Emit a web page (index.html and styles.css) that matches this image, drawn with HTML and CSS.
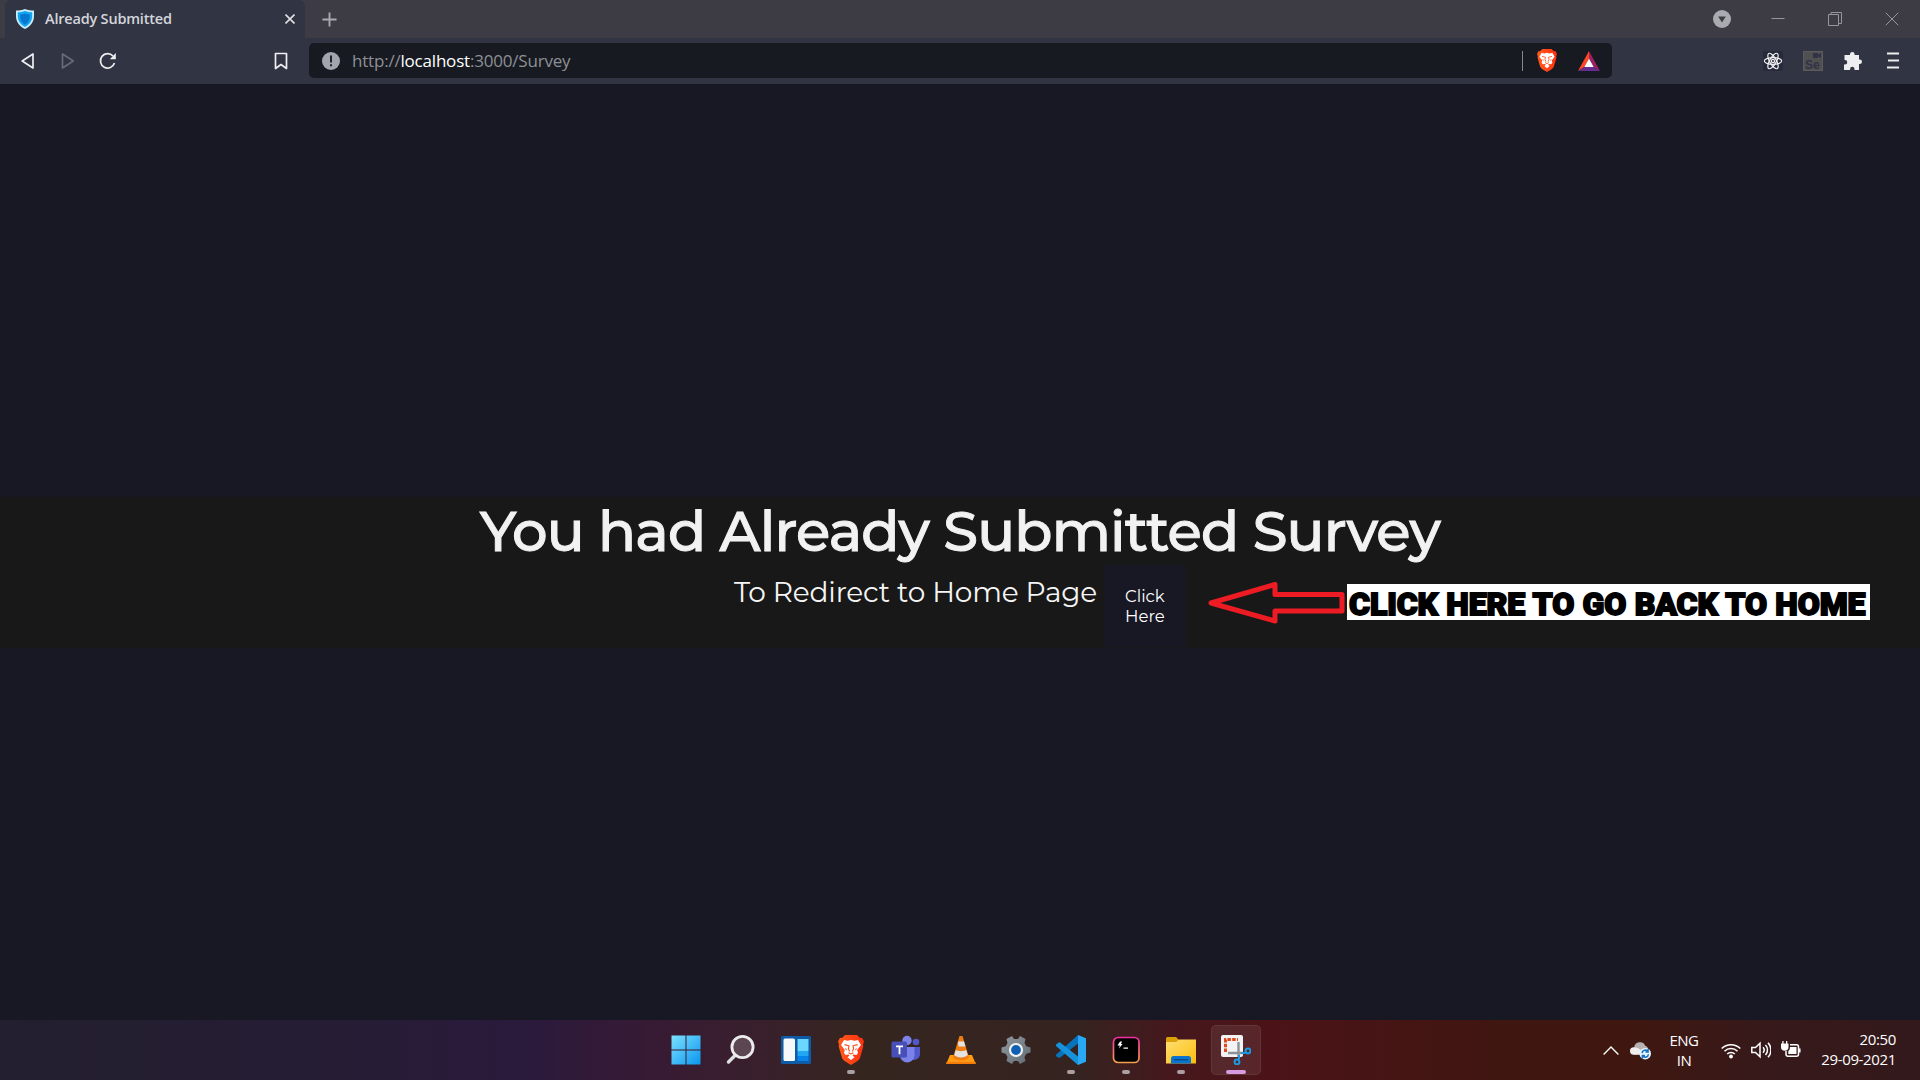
FILE: index.html
```html
<!DOCTYPE html>
<html lang="en">
<head>
<meta charset="utf-8">
<title>Already Submitted</title>
<link rel="stylesheet" href="styles.css">
</head>
<body>
<svg class="defs" width="0" height="0" aria-hidden="true">
  <defs>
    <linearGradient id="brave" x1="0" x2="1"><stop offset="0" stop-color="#ff5a1c"/><stop offset="1" stop-color="#ff2f10"/></linearGradient>
    <linearGradient id="win" x1="0" y1="0" x2="1" y2="1"><stop offset="0" stop-color="#7ce2ff"/><stop offset="1" stop-color="#0a95ee"/></linearGradient>
    <linearGradient id="term" x1="0" y1="0" x2="0" y2="1"><stop offset="0" stop-color="#f32fa4"/><stop offset="1" stop-color="#f5a04c"/></linearGradient>
    <linearGradient id="folder" x1="0" y1="0" x2="1" y2="1"><stop offset="0" stop-color="#ffdf73"/><stop offset="1" stop-color="#fbbd0c"/></linearGradient>
    <linearGradient id="gear" x1="0" y1="0" x2="1" y2="1"><stop offset="0" stop-color="#8f999f"/><stop offset="1" stop-color="#626c73"/></linearGradient>
    <symbol id="lion" viewBox="0 0 26 30">
      <path fill="url(#brave)" d="M7 0h12l3 3 2-.3 2 3.800-1 3 .3 2-3.500 12L19.500 26 13 30l-6.500-4-2.300-2.500L.7 11.500 1 9.500 0 6.500l2-3.800L4 3z"/>
      <path fill="#fff" d="M6 5l3.500.8L13 5l3.500.8L20 5l3 5-3.800 5 .8 3-1.500 2-3-.5-1 1 2 1.700L13 25l-3.500-2.800 2-1.700-1-1-3 .5L6 18l.8-3L3 10z"/>
      <path fill="none" stroke="#ff4a18" stroke-width="1.100" d="M6.500 9.600l4.500 1.200-.6 3 1.200 2.700M19.500 9.600L15 10.800l.6 3-1.200 2.700M10.500 17.800l2.500 1.200 2.500-1.200M7.500 13.500l1 1.500M18.500 13.500l-1 1.500"/>
    </symbol>
  </defs>
</svg>

<div class="screen">
  <header class="tabstrip">
    <div class="tab">
      <svg class="favicon" viewBox="0 0 18 20"><path fill="#c9efff" d="M9 0c3 1.300 6 1.500 9 1.500V7c0 6-3.500 10.500-9 13C3.500 17.500 0 13 0 7V1.500C3 1.500 6 1.300 9 0z"/><path fill="#12a5f4" d="M9 2c2.500.9 4.800 1.200 7.200 1.200V7c0 5-2.700 8.800-7.200 11C4.500 15.800 1.800 12 1.800 7V3.200C4.200 3.200 6.500 2.900 9 2z"/><path fill="#0878cf" d="M9 4.500c1.800.6 3.200.9 4.700.9V8c0 3.500-1.700 6-4.700 7.800C6 14 4.300 11.500 4.300 8V5.400C5.800 5.400 7.200 5.100 9 4.500z"/></svg>
      <span class="tab-title">Already Submitted</span>
      <svg class="tab-close" viewBox="0 0 10 10"><path d="M.5.5l9 9M9.500.5l-9 9"/></svg>
    </div>
    <svg class="new-tab" viewBox="0 0 16 16"><path d="M8 .5v15M.5 8h15"/></svg>
    <div class="window-controls">
      <svg class="tab-search" viewBox="0 0 18 18"><circle cx="9" cy="9" r="9" fill="#a9abb0"/><path fill="#3d3c44" d="M5.200 6.500h7.600L9 12.500z"/></svg>
      <span class="control"><svg viewBox="0 0 14 14"><path d="M.5 6.500h13"/></svg></span>
      <span class="control"><svg viewBox="0 0 14 14"><path d="M.5 2.500h10v11H.5zM3 2.500v-2h10.500v11h-3"/></svg></span>
      <span class="control"><svg viewBox="0 0 14 14"><path d="M.8.8l12.400 12.400M13.200.8L.8 13.200"/></svg></span>
    </div>
  </header>

  <nav class="toolbar">
    <span class="tool"><svg viewBox="0 0 20 20"><path d="M15 3v14L4.200 10z"/></svg></span>
    <span class="tool dim"><svg viewBox="0 0 20 20"><path d="M4.500 3v14L15.300 10z"/></svg></span>
    <span class="tool"><svg viewBox="0 0 20 20"><path d="M15 5A7.200 7.200 0 1 0 16.500 12"/><path class="solid" d="M17.800 2v6.300h-6z"/></svg></span>
    <span class="tool bookmark"><svg viewBox="0 0 20 20"><path d="M4.500 2.500h11v15L10 13.500l-5.500 4z"/></svg></span>
    <div class="address">
      <svg class="info" viewBox="0 0 18 18"><circle cx="9" cy="9" r="9" fill="#a2a5ad"/><path fill="#20232c" d="M8 3.500h2v7H8zM8 12.300h2v2H8z"/></svg>
      <span class="url">http://<b>localhost</b>:3000/Survey</span>
      <span class="divider"></span>
      <svg class="shield" viewBox="0 0 26 30"><use href="#lion"/></svg>
      <svg class="rewards" viewBox="0 0 22 20"><path fill="#ff4724" d="M11 0v7.500L6.300 16 0 20z"/><path fill="#9e1f63" d="M11 0l11 20-6.300-4L11 7.500z"/><path fill="#662d91" d="M0 20l6.300-4h9.400l6.300 4z"/><path fill="#fff" d="M11 7.500l4.700 8.500H6.300z"/></svg>
    </div>
    <div class="extensions">
      <span class="tool"><svg class="react" viewBox="0 0 20 20"><rect width="20" height="20" rx="2"/><circle cx="10" cy="10" r="1.600"/><ellipse cx="10" cy="10" rx="8.700" ry="3.300"/><ellipse cx="10" cy="10" rx="8.700" ry="3.300" transform="rotate(60 10 10)"/><ellipse cx="10" cy="10" rx="8.700" ry="3.300" transform="rotate(120 10 10)"/></svg></span>
      <span class="tool"><span class="selenium"><svg viewBox="0 0 8 5"><path d="M0 0h5v1.500L8 0v5L5 3.500V5H0z"/></svg>Se</span></span>
      <span class="tool"><svg class="puzzle" viewBox="0 0 18 18"><path d="M2 3h4V2.300a2.300 2.300 0 0 1 4.600 0V3H15v4.500h.7a2.300 2.300 0 0 1 0 4.600H15V18h-4.500v-1a2.200 2.200 0 0 0-4.400 0v1H0v-5.500h1a2.200 2.200 0 0 0 0-4.500H.5V3z"/></svg></span>
      <span class="tool"><svg class="menu" viewBox="0 0 12 18"><path d="M0 1.500h12M1 8.500h11M0 15.500h12"/></svg></span>
    </div>
  </nav>

  <main class="page">
    <section class="notice">
      <h1>You had Already Submitted Survey</h1>
      <div class="redirect">
        <p>To Redirect to Home Page</p>
        <a class="home-link">Click<br>Here</a>
      </div>
      <div class="callout">
        <svg class="arrow" viewBox="0 0 138 42"><path d="M3 21L67 2.500V12.500H134V29H67V39z"/></svg>
        <span class="callout-text">CLICK HERE TO GO BACK TO HOME</span>
      </div>
    </section>
  </main>

  <footer class="taskbar">
    <div class="apps">
      <span class="app"><svg viewBox="0 0 30 30"><path fill="url(#win)" d="M.5.500H14.500v14H.5zM15.500.5h14v14h-14zM.5 15.500h14v14H.5zM15.500 15.500h14v14h-14z"/></svg></span>
      <span class="app"><svg viewBox="0 0 30 30"><path stroke="#dfe0e1" stroke-width="3.400" stroke-linecap="round" d="M2.500 27l7-7"/><circle cx="16.500" cy="12" r="10.600" fill="#5c4652" stroke="#ececec" stroke-width="2.800"/></svg></span>
      <span class="app"><svg viewBox="0 0 30 30"><rect y="1" width="30" height="28" rx="1.500" fill="#0f5ba6"/><rect x="2.500" y="3.500" width="11.500" height="22.500" rx="1.500" fill="#f7f8f9"/><path fill="#6bd7ff" d="M16.500 4h11v12h-11z"/><path fill="#22a7f5" d="M16.500 16h11v5h-11z"/><path fill="#0784ea" d="M16.500 21h11v5h-11z"/></svg></span>
      <span class="app running"><svg viewBox="0 0 26 30"><use href="#lion"/></svg></span>
      <span class="app"><svg viewBox="0 0 30 30"><circle cx="25" cy="7" r="3.300" fill="#5059c9"/><path fill="#5059c9" d="M20 12h9v8a6 6 0 0 1-9 4z"/><circle cx="16" cy="5.500" r="4.700" fill="#7b83eb"/><path fill="#7b83eb" d="M9 12h14.500v9a7.300 7.300 0 0 1-14.500 0z"/><rect x=".5" y="6.500" width="15.500" height="16" rx="1.500" fill="#4650b8"/><path fill="#fff" d="M5 10.500h7v1.700H9.400v7H7.600v-7H5z"/></svg></span>
      <span class="app"><svg viewBox="0 0 30 30"><path fill="#ff9a12" d="M4 20h22l3.700 8.800H.3z"/><path fill="#f57c08" d="M.3 27h29.400v2H.3z"/><path fill="#ef7d14" d="M13.500 1h3L23 22.500c-3 3.500-13 3.500-16 0z"/><path fill="#e3e3e3" d="M12 6.500h6l1.500 5h-7zM9.800 15c2 1.500 8.400 1.500 10.400 0l1.500 5c-2.500 3.300-11 3.300-13.400 0z"/></svg></span>
      <span class="app"><svg viewBox="0 0 30 30"><path fill="url(#gear)" d="M11 1l2 3h4l2-3 5.500 3-1 4 1.800 3.200 4.200 1.300v5l-4.200 1.300L23.500 22l1 4-5.500 3-2-3h-4l-2 3-5.500-3 1-4-1.800-3.200L.5 17.500v-5l4.200-1.300L6.500 8l-1-4z"/><circle cx="15" cy="15" r="6" fill="#0f5fb4" stroke="#f2f2f2" stroke-width="2.200"/></svg></span>
      <span class="app running"><svg viewBox="0 0 30 30"><path fill="#0873bd" d="M0 19.800L22 0v8.500L3.500 23 0 21.200z"/><path fill="#1592db" d="M0 9.500L3.500 7 22 21.500V30L0 11z"/><path fill="#29a8f5" d="M22 0l8 3.300v23.400L22 30z"/></svg></span>
      <span class="app running"><svg viewBox="0 0 30 30"><rect x="2.500" y="2.500" width="25.500" height="25" rx="4.500" fill="#000" stroke="url(#term)" stroke-width="1.700"/><path fill="#fff" d="M9 6.500h2l-1 2.500h1.500L8 13.500l.8-3H6.500zM12.500 12.500h4.500v1.200h-4.500z"/></svg></span>
      <span class="app running"><svg viewBox="0 0 30 30"><path fill="#dda009" d="M0 3.500C0 2.500 1 2 2 2h8l3 3v5H0z"/><path fill="url(#folder)" d="M0 7h10l3-2.500h17V28.500H0z"/><path fill="#0b74cd" d="M5 28.500v-5A2.500 2.500 0 0 1 7.500 21h15a2.500 2.500 0 0 1 2.500 2.500v5z"/><path fill="#064b8e" d="M8 24h14v1.400H8z"/></svg></span>
      <span class="app active"><svg viewBox="0 0 30 30"><rect width="22" height="22" rx="2" fill="#f3f3f5"/><path fill="none" stroke="#dd4a1c" stroke-width="3" stroke-dasharray="3.500 1.300" d="M4.500 17V4.500H17"/><path stroke="#8b9298" stroke-width="2.400" fill="none" d="M17.500 7v15M7 18h15"/><g fill="none" stroke="#1a9be6" stroke-width="2"><circle cx="16" cy="27" r="2.400"/><circle cx="27" cy="16" r="2.400"/><path d="M18 24.500V20M24.500 18H20"/></g></svg></span>
    </div>
    <div class="tray">
      <svg class="chevron" viewBox="0 0 16 9"><path d="M.6 8.500L8 1l7.400 7.500"/></svg>
      <svg class="cloud" viewBox="0 0 20 18"><path fill="#b8b1b1" d="M4 6a5.500 5.500 0 0 1 10.500-1.500A4.500 4.500 0 0 1 17 11L4 13z"/><path fill="#efeded" d="M3.500 13a3.500 3.500 0 0 1 0-7c3 0 5 1 7 3v4z"/><circle cx="14.500" cy="12" r="5.500" fill="#e9f4fd"/><path fill="none" stroke="#1472c4" stroke-width="1.500" d="M11.500 11.500a3 3 0 0 1 5.500-1.500M17.500 12.500a3 3 0 0 1-5.500 1.500M17.200 7.500V10.300h-2.500M11.800 16.500v-2.700h2.500"/></svg>
      <span class="language">ENG<br>IN</span>
      <svg class="status wifi" viewBox="0 0 20 20"><path d="M.7 8.500a13.200 13.200 0 0 1 18.600 0M3.500 11.200a9.200 9.200 0 0 1 13 0M6.200 14a5.300 5.300 0 0 1 7.600 0"/><circle class="fill" cx="10" cy="16.500" r="1.900"/></svg>
      <svg class="status" viewBox="0 0 20 20"><path d="M.8 7.500h3.700L9 3.300v13.400l-4.500-4.200H.8zM12 7.300a4 4 0 0 1 0 5.400M14.500 5a7.300 7.300 0 0 1 0 10M17 2.700a10.500 10.500 0 0 1 0 14.600"/></svg>
      <svg class="status" viewBox="0 0 20 20"><path d="M9 4.700h6.500a2 2 0 0 1 2 2v7.600a2 2 0 0 1-2 2H7a2 2 0 0 1-2-2V11M18.800 8.500v4"/><path class="fill" d="M9 7h6.500v7H7.300V11C8.500 10 9 9 9 7zM0 3.500h7.500V7a3.700 3.700 0 0 1-7.500 0zM1.300 1h1.300v3H1.300zM5 1h1.300v3H5z"/></svg>
      <span class="clock">20:50<br>29-09-2021</span>
    </div>
  </footer>
</div>
</body>
</html>
```
FILE: styles.css
```css
* { box-sizing: border-box; }
body { margin: 0; font-family: "Noto Sans", sans-serif; color: #fff; overflow: hidden; }
svg { display: block; flex: none; }
.defs { position: absolute; }
.screen { width: 1920px; height: 1080px; display: flex; flex-direction: column; background: #181724; }

.tabstrip { height: 38px; flex: none; display: flex; align-items: center; padding-left: 5px; background: #3d3c44; }
.tab { width: 300px; height: 38px; display: flex; align-items: center; padding: 0 10px 1px 11px; background: #313443; border-radius: 6px 6px 0 0; }
.favicon { width: 18px; height: 20px; }
.tab-title { flex: 1; margin-left: 11px; font: 600 14.500px "Open Sans", sans-serif; letter-spacing: -0.200px; color: #d3d5db; white-space: nowrap; }
.tab-close { width: 10px; height: 10px; stroke: #dfe0e3; stroke-width: 1.600; }
.new-tab { width: 15px; height: 15px; margin-left: 17px; stroke: #a9aaaf; stroke-width: 2; }
.window-controls { display: flex; align-items: center; margin-left: auto; padding-bottom: 1px; }
.tab-search { width: 18px; height: 18px; margin-right: 18px; }
.control { width: 57px; display: grid; place-items: center; }
.control svg { width: 14px; height: 14px; fill: none; stroke: #96969b; }

.toolbar { height: 46px; flex: none; display: flex; align-items: center; padding: 0 7px 1px 8px; background: #313443; }
.tool { width: 40px; height: 40px; display: grid; place-items: center; }
.toolbar > .tool svg { width: 20px; height: 20px; fill: none; stroke: #eeeef0; stroke-width: 1.700; stroke-linejoin: round; }
.toolbar > .dim svg { stroke: #686b77; }
.toolbar > .tool .solid { fill: #eeeef0; stroke: none; }
.bookmark { margin-left: 133px; }
.address { width: 1303px; height: 35px; margin-left: 8px; padding: 0 12px 0 13px; display: flex; align-items: center; background: #181a21; border-radius: 5px; }
.info { width: 18px; height: 18px; }
.url { flex: 1; margin-left: 12px; font: 17px "Open Sans", sans-serif; letter-spacing: -0.200px; color: #8d9096; }
.url b { font-weight: 400; color: #fff; }
.divider { width: 1px; height: 20px; background: #85878c; }
.shield { width: 20px; height: 23px; margin-left: 14px; }
.rewards { width: 22px; height: 20px; margin: 1px 0 0 21px; }
.extensions { display: flex; margin-left: auto; }
.react { width: 20px; height: 20px; fill: none; stroke: #f0f0f2; stroke-width: 1.200; }
.react rect { fill: #262a3a; stroke: none; }
.selenium { width: 20px; height: 20px; padding: 1px; background: #504f51; border: 1px solid #5c5b5c; font: 700 12px/10px "Liberation Sans", sans-serif; color: #303346; }
.selenium svg { width: 8px; height: 5px; margin: 0 0 2px auto; fill: #303346; }
.puzzle { width: 18px; height: 18px; fill: #eeeef0; }
.menu { width: 12px; height: 18px; stroke: #eeeef0; stroke-width: 1.800; }

.page { flex: 1; padding-top: 413px; font-family: Montserrat, Inter, sans-serif; }
.notice { position: relative; height: 151px; background: #181818; }
h1 { margin: 0; height: 68px; font-size: 56px; line-height: 68px; font-weight: 500; letter-spacing: -0.830px; text-align: center; color: #f2f2f2; white-space: nowrap; -webkit-text-stroke: 1px #f2f2f2; }
.redirect { display: flex; justify-content: center; gap: 8px; }
.redirect p { width: 362px; margin: 0; font-size: 28px; line-height: 54px; font-weight: 400; letter-spacing: -0.200px; white-space: nowrap; color: #f5f5f5; }
.home-link { width: 82px; height: 82px; padding: 21px 0 0 21px; background: #181724; font-size: 16.500px; line-height: 20px; }
.callout { position: absolute; left: 1208px; top: 86px; display: flex; }
.arrow { width: 138px; height: 42px; margin: -1px 1px 0 0; fill: none; stroke: #ed1c24; stroke-width: 5; stroke-linejoin: round; }
.callout-text { width: 523px; height: 36px; margin-top: 1px; padding-left: 2px; background: #fff; color: #000; font: 900 32px/40px Roboto, sans-serif; letter-spacing: -0.100px; word-spacing: 0.500px; white-space: nowrap; -webkit-text-stroke: 1.800px #000; }

.taskbar { position: relative; height: 60px; flex: none; display: flex; align-items: center; justify-content: flex-end; background: linear-gradient(90deg, #231f2f 0, #261d35 350px, #2b1a3c 530px, #371a34 650px, #39202c 760px, #35251f 860px, #35231f 1080px, #45181d 1170px, #4b1317 1270px, #401611 1500px, #40170f 1620px, #37191a 1760px, #33191c 1920px); }
.apps { display: flex; gap: 5px; margin-right: 342px; }
.app { position: relative; width: 50px; height: 50px; display: grid; place-items: center; border-radius: 5px; }
.app svg { width: 30px; height: 30px; }
.active { background: #ffffff14; box-shadow: inset 0 0 0 1px #ffffff12; }
.running::after, .active::after { content: ""; position: absolute; bottom: 1px; left: 21px; width: 8px; height: 4px; border-radius: 2px; background: #aaa0a2; }
.active::after { left: 15px; width: 20px; background: #d99ae4; }
.tray { display: flex; align-items: center; padding-right: 24px; font: 15px/20px "Open Sans", sans-serif; }
.chevron { width: 16px; height: 9px; fill: none; stroke: #fff; stroke-width: 1.300; }
.cloud { width: 21px; height: 19px; margin-left: 11px; }
.language { width: 34px; margin: 0 20px 0 16px; text-align: center; letter-spacing: -0.500px; }
.status { width: 20px; height: 20px; margin-right: 10px; fill: none; stroke: #fff; stroke-width: 1.500; }
.status .fill { fill: #fff; stroke: none; }
.clock { width: 85px; padding-bottom: 2px; text-align: right; letter-spacing: -0.350px; white-space: nowrap; }
```
